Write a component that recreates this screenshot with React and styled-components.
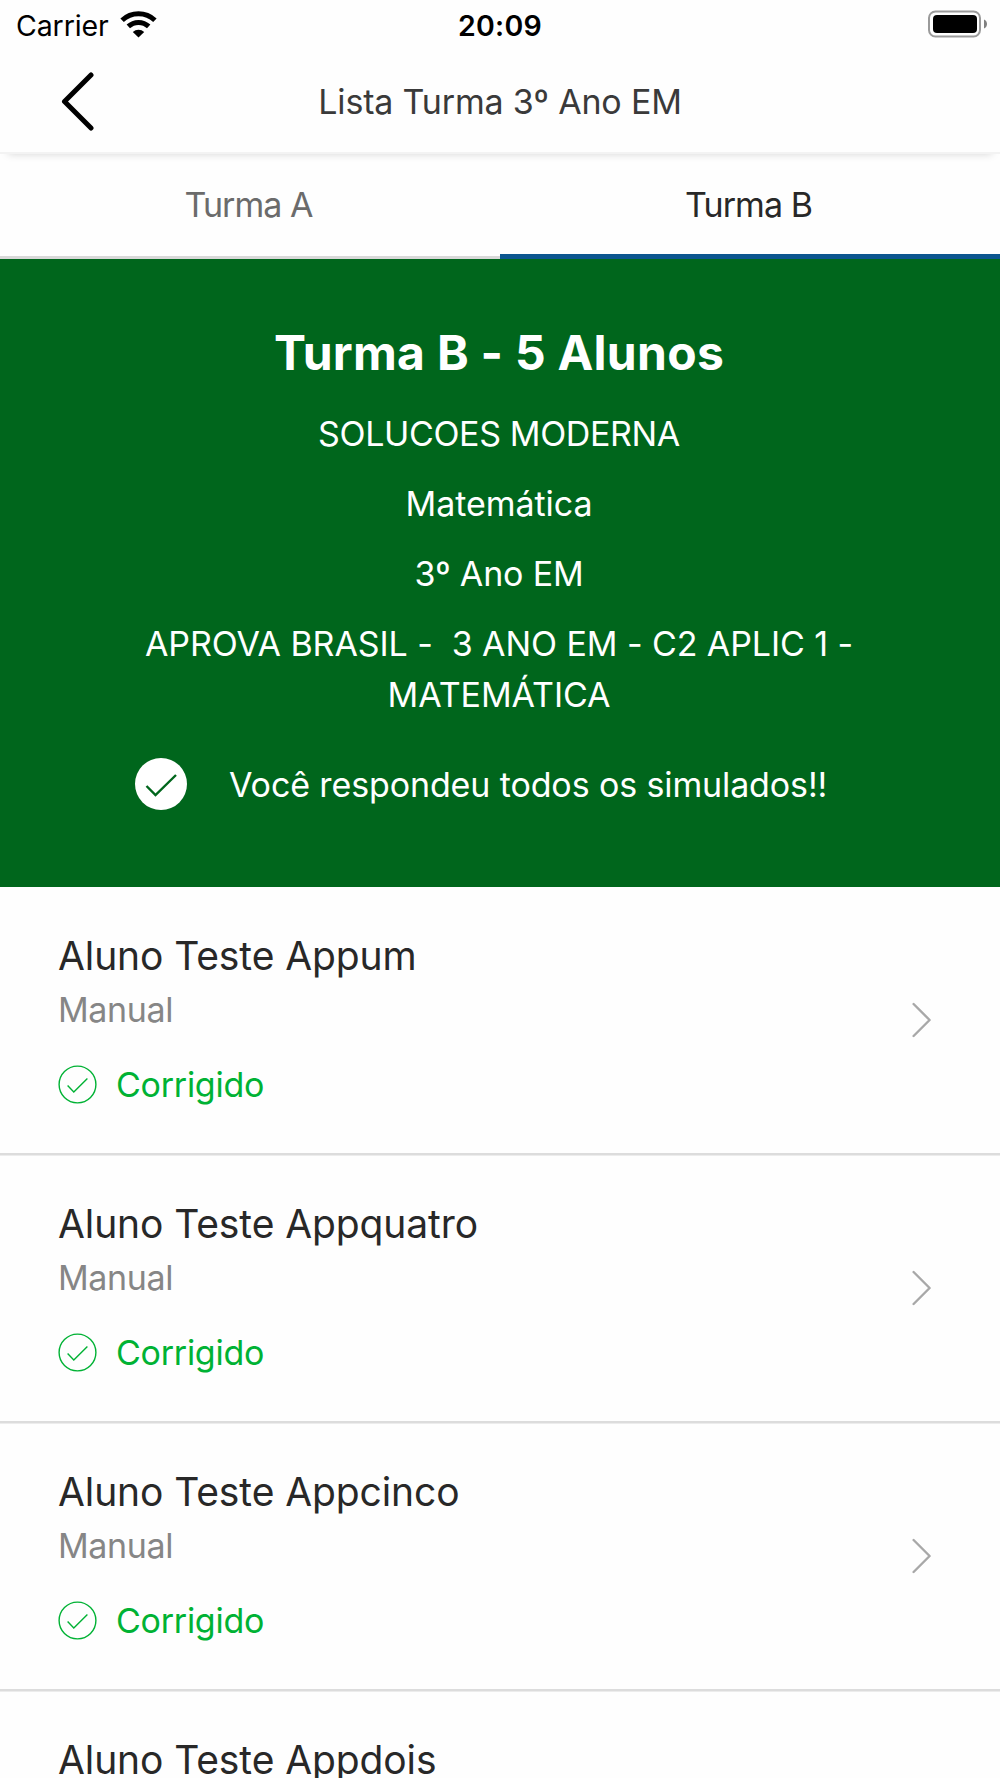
import React from "react";
import styled, { createGlobalStyle } from "styled-components";

const GlobalStyle = createGlobalStyle`
  body {
    margin: 0;
    background: #fefefe;
    overflow: hidden;
  }
`;

const Screen = styled.div`
  box-sizing: border-box;
  width: 1000px;
  height: 1778px;
  overflow: hidden;
  display: flex;
  flex-direction: column;
  background: #fefefe;
  color: #282828;
  font-family: Inter, "Liberation Sans", sans-serif;
  font-size: 34px;
  font-weight: 400;
  line-height: 51px;

  svg {
    display: block;
    flex: none;
    fill: none;
  }
`;

const StatusBar = styled.div`
  flex: none;
  height: 51px;
  padding: 0 12px 0 16px;
  display: grid;
  grid-template-columns: 1fr auto 1fr;
  align-items: center;
  color: #000;
  font-size: 28.5px;
`;

const Carrier = styled.div`
  display: flex;
  align-items: center;
  gap: 11.5px;
  letter-spacing: -0.1px;

  svg {
    margin-bottom: 3px;
  }
`;

const Clock = styled.div`
  font-weight: 600;
  letter-spacing: 0.3px;
  padding-right: 4px;
`;

const Battery = styled.div`
  display: flex;
  justify-content: flex-end;
  padding-bottom: 3px;
`;

const Header = styled.header`
  flex: none;
  height: 101px;
  display: grid;
  grid-template-columns: 160px 1fr 160px;
  align-items: center;
  border-bottom: 2px solid #f3f3f3;
  box-shadow: 0 8px 8px -8px rgba(0, 0, 0, 0.17);
`;

const BackButton = styled.button`
  border: 0;
  padding: 0 0 2px 59.5px;
  background: none;
`;

const HeaderTitle = styled.h1`
  margin: 0;
  font-size: 34px;
  font-weight: inherit;
  text-align: center;
  letter-spacing: -0.18px;
  color: #3a3a3a;
`;

const Tabs = styled.nav`
  flex: none;
  height: 105px;
  display: grid;
  grid-template-columns: 1fr 1fr;
`;

const Tab = styled.button`
  border: 0;
  padding: 0 3px 5px 0;
  background: none;
  font: inherit;
  letter-spacing: -0.95px;
  color: ${(p) => (p.$active ? "#282828" : "#6b6b6b")};
  box-shadow: inset 0 ${(p) => (p.$active ? "-5px #0b558f" : "-3px #d8d8d8")};
`;

const Summary = styled.section`
  flex: none;
  box-sizing: border-box;
  height: 628px;
  padding: 64px 2px 0 0;
  display: flex;
  flex-direction: column;
  align-items: center;
  gap: 19px;
  background: #00661c;
  color: #fff;
  text-align: center;
`;

const SummaryTitle = styled.h2`
  margin: 0 0 6px;
  font-size: 48px;
  font-weight: 700;
  line-height: 60px;
  letter-spacing: 0.27px;
`;

const SummaryLine = styled.div`
  width: 720px;
  white-space: pre-wrap;
  letter-spacing: ${(p) => p.$tracking || 0}px;
`;

const Notice = styled.div`
  margin-top: 19px;
  width: 728px;
  display: flex;
  align-items: center;
  gap: 42px;
  letter-spacing: -0.12px;
`;

const List = styled.ul`
  margin: 0;
  padding: 0;
  list-style: none;
`;

const Row = styled.li`
  box-sizing: border-box;
  height: 268px;
  padding: 43px 68px 0 58px;
  display: flex;
  justify-content: space-between;
  border-bottom: 2px solid #dcdcdc;
  box-shadow: 0 1px #ececec;
`;

const Student = styled.div`
  display: flex;
  flex-direction: column;
`;

const Name = styled.div`
  font-size: 39px;
  letter-spacing: -0.1px;
`;

const Mode = styled.div`
  margin-top: 3px;
  letter-spacing: -0.35px;
  color: #868686;
`;

const Result = styled.div`
  margin-top: 24px;
  display: flex;
  align-items: center;
  gap: 19px;
  letter-spacing: -0.25px;
  color: #00b234;
`;

const Arrow = styled.div`
  padding-top: 72px;
`;

const WifiIcon = () => (
  <svg width="37" height="28" viewBox="0 0 37 28">
    <g stroke="#000" strokeWidth="5">
      <path d="M2.1 10.2a23.8 23.8 0 0 1 32.8 0" />
      <path d="M8.3 16.4a15 15 0 0 1 20.4 0" />
    </g>
    <path d="M18.5 27.4 12.8 21.9a8.4 8.4 0 0 1 11.4 0z" fill="#000" />
  </svg>
);

const BatteryIcon = () => (
  <svg width="61" height="28" viewBox="0 0 61 28">
    <rect x="2" y="1.5" width="51" height="25" rx="6.5" stroke="#9a9a9a" strokeWidth="2" />
    <rect x="6" y="5" width="44" height="18" rx="4" fill="#000" />
    <path d="M57 9.5c4 1.6 4 7.4 0 9z" fill="#808080" />
  </svg>
);

const BackIcon = () => (
  <svg width="34" height="60" viewBox="0 0 34 60" stroke="#000" strokeWidth="5" strokeLinecap="round" strokeLinejoin="round">
    <path d="M31 4 4.5 30.5 31 57" />
  </svg>
);

const DoneIcon = () => (
  <svg width="52" height="52" viewBox="0 0 52 52">
    <circle cx="26" cy="26" r="26" fill="#fff" />
    <path d="M11.5 28 20.5 37 41 17" stroke="#00661c" strokeWidth="2.4" />
  </svg>
);

const CheckIcon = () => (
  <svg width="39" height="39" viewBox="0 0 39 39" stroke="#00b234" strokeWidth="1.4">
    <circle cx="19.5" cy="19.5" r="18.4" />
    <path d="M9.6 20.5 15.8 27 29.4 13.6" />
  </svg>
);

const ChevronIcon = () => (
  <svg width="20" height="36" viewBox="0 0 20 36" stroke="#a8a8a8" strokeWidth="2.4" strokeLinecap="round" strokeLinejoin="round">
    <path d="M1.6 2 17.6 18 1.6 34" />
  </svg>
);

const tabs = [
  { label: "Turma A", active: false },
  { label: "Turma B", active: true },
];

const students = ["Aluno Teste Appum", "Aluno Teste Appquatro", "Aluno Teste Appcinco", "Aluno Teste Appdois"];

export default function App() {
  return (
    <Screen>
      <GlobalStyle />
      <StatusBar>
        <Carrier>
          Carrier
          <WifiIcon />
        </Carrier>
        <Clock>20:09</Clock>
        <Battery>
          <BatteryIcon />
        </Battery>
      </StatusBar>
      <Header>
        <BackButton aria-label="Voltar">
          <BackIcon />
        </BackButton>
        <HeaderTitle>Lista Turma 3º Ano EM</HeaderTitle>
      </Header>
      <Tabs>
        {tabs.map((tab) => (
          <Tab key={tab.label} $active={tab.active}>
            {tab.label}
          </Tab>
        ))}
      </Tabs>
      <Summary>
        <SummaryTitle>Turma B - 5 Alunos</SummaryTitle>
        <SummaryLine $tracking={-0.36}>SOLUCOES MODERNA</SummaryLine>
        <SummaryLine $tracking={-0.05}>Matemática</SummaryLine>
        <SummaryLine $tracking={-0.16}>3º Ano EM</SummaryLine>
        <SummaryLine $tracking={-0.08}>{"APROVA BRASIL -  3 ANO EM - C2 APLIC 1 - MATEMÁTICA"}</SummaryLine>
        <Notice>
          <DoneIcon />
          Você respondeu todos os simulados!!
        </Notice>
      </Summary>
      <List>
        {students.map((name) => (
          <Row key={name}>
            <Student>
              <Name>{name}</Name>
              <Mode>Manual</Mode>
              <Result>
                <CheckIcon />
                Corrigido
              </Result>
            </Student>
            <Arrow>
              <ChevronIcon />
            </Arrow>
          </Row>
        ))}
      </List>
    </Screen>
  );
}
